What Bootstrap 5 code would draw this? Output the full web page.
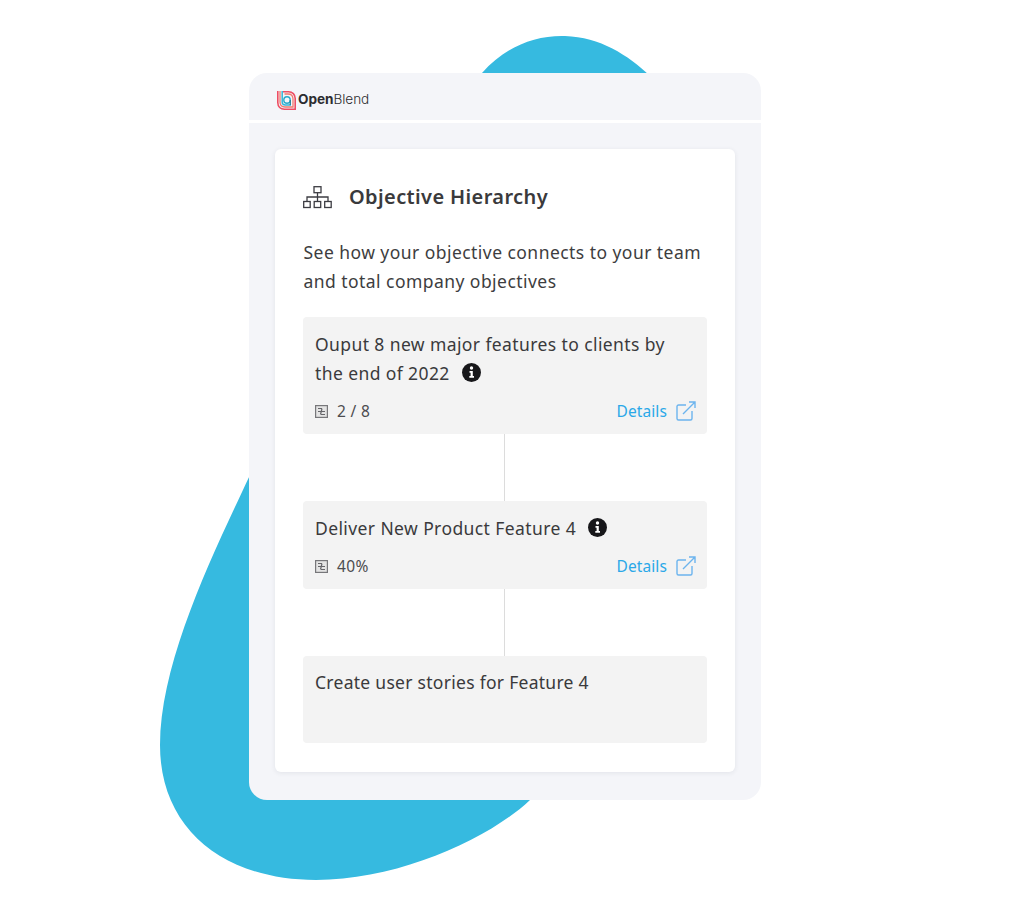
<!DOCTYPE html>
<html lang="en">
<head>
<meta charset="utf-8">
<title>Objective Hierarchy</title>
<link rel="stylesheet" href="https://cdn.jsdelivr.net/npm/bootstrap@5.3.0/dist/css/bootstrap.min.css">
<style>
html,body{margin:0;background:#fff;font-family:"Noto Sans","Open Sans",sans-serif;color:#3a3a3c}
.stage{width:1010px;height:916px;padding:73px 0 0 249px}
.blob{left:0;top:0;width:1010px;height:916px}
.shell{width:512px;height:727px;background:#f4f5f9;border-radius:18px}
.topbar{height:47px;padding:7px 28px 0;gap:2px}
.divider{height:3px;background:#fff}
.brand{font-family:"Inter","Noto Sans",sans-serif;font-size:13.6px;letter-spacing:-.05px;color:#2c2c30;line-height:1;font-weight:300}
.brand b{font-weight:700}
.panel{margin:26px 26px 0;height:623px;border:0;border-radius:6px;box-shadow:0 1px 5px rgba(40,50,80,.09);padding:34px 28px 28px}
.heading{gap:17px;height:28px;margin-bottom:27px}
.heading h1{font-size:20px;font-weight:600;color:#3a3a3c;font-family:"Noto Sans",sans-serif;letter-spacing:.38px}
.intro{margin:0 0 21px;padding-left:.5px;font-size:17.5px;line-height:29px;color:#3d3d40;letter-spacing:.45px}
.obj{background:#f3f3f3;border-radius:4px;padding:13px 11px 0 12px;font-size:17.5px;line-height:29px;color:#3a3a3c;letter-spacing:.4px}
.obj-a{height:117px}
.obj-b{height:87.5px}
.obj-c{height:87.5px;padding-top:12px;letter-spacing:.28px}
.info{display:inline-block;vertical-align:-2px;margin-left:7px}
.metric{font-size:15.5px;line-height:22px;margin-top:12px;letter-spacing:.35px}
.metric-left{gap:9px;color:#4c4c4f}
.detail{gap:9px;color:#2aa8e8;text-decoration:none;letter-spacing:.1px}
.link-line{width:1px;height:67px;background:#dcdcdc;margin:0 0 0 201px}
</style>
</head>
<body>
<div class="stage position-relative overflow-hidden">
<svg class="blob position-absolute" viewBox="0 0 1010 916" aria-hidden="true">
<path fill="#36bae0" d="M482 73C505 47 535 35 565 36C600 37 628 55 650 76L650 120L530 800C490 838 400 880 316 880C225 880 160 830 160 745C160 660 215 550 250 475L300 300Z"/>
</svg>
<div class="shell position-relative overflow-hidden">
  <div class="topbar d-flex align-items-center">
    <svg width="19" height="19" viewBox="0 0 19 19" fill="none" aria-hidden="true">
      <path d="M.8 0V11.500C.8 15.500 3.500 18.200 7.500 18.200H18.200V7.500C18.200 3.500 15.500.8 11.500.8H6" stroke="#ee4d63" stroke-width="1.600"/>
      <path d="M3 0V11C3 14 5 16 8 16H16V8C16 5 14 3 11 3H7.500" stroke="#f07a6e" stroke-width="1.300"/>
      <path d="M5.200 0V11C5.200 12.700 6.500 14 8.300 14H14" stroke="#35b5d6" stroke-width="1.500"/>
      <circle cx="10" cy="9" r="3.200" stroke="#2aa9c9" stroke-width="1.400"/>
      <path d="M13.300 9V14" stroke="#277f99" stroke-width="1.300"/>
    </svg>
    <span class="brand"><b>Open</b>Blend</span>
  </div>
  <div class="divider"></div>
  <div class="panel card">
    <div class="heading d-flex align-items-center">
      <svg width="29" height="23" viewBox="0 0 29 23" fill="none" stroke="#3c3c42" stroke-width="1.300" aria-hidden="true">
        <rect x="11" y=".7" width="7" height="6"/>
        <path d="M14.500 6.700V15M4 15V11H25V15"/>
        <rect x=".7" y="15.500" width="6.500" height="6"/><rect x="11.200" y="15.500" width="6.500" height="6"/><rect x="21.700" y="15.500" width="6.500" height="6"/>
      </svg>
      <h1 class="m-0">Objective Hierarchy</h1>
    </div>
    <p class="intro">See how your objective connects to your team and total company objectives</p>

    <div class="obj obj-a">
      <div>Ouput 8 new major features to clients by the end of 2022 <svg class="info" width="19" height="19" viewBox="0 0 19 19" aria-hidden="true"><circle cx="9.500" cy="9.500" r="9.500" fill="#17171a"/><circle cx="9.500" cy="5" r="1.700" fill="#fff"/><path d="M7.500 8H10.800V13H12V14.700H7.300V13H8.600V9.700H7.500Z" fill="#fff"/></svg></div>
      <div class="metric d-flex justify-content-between align-items-center">
        <span class="metric-left d-flex align-items-center"><svg width="13" height="13" viewBox="0 0 13 13" fill="none" aria-hidden="true"><rect x=".6" y=".6" width="11.800" height="11.800" fill="#e4e4e4" stroke="#77777a" stroke-width="1.200"/><path d="M3 3.500H7M3 6.500H10M6 9.500H10M7 3.500L5.500 9.500" stroke="#66666a" stroke-width="1.200"/></svg>2 / 8</span>
        <a class="detail d-flex align-items-center" href="#">Details <svg width="20" height="20" viewBox="0 0 20 20" fill="none" stroke="#6cb4ee" stroke-width="1.400" aria-hidden="true"><path d="M10 4H2.500A1.500 1.500 0 0 0 1 5.500V17.500A1.500 1.500 0 0 0 2.500 19H14.500A1.500 1.500 0 0 0 16 17.500V10"/><path d="M7 13L19 1M13 1H19V7"/></svg></a>
      </div>
    </div>
    <div class="link-line"></div>
    <div class="obj obj-b">
      <div>Deliver New Product Feature 4 <svg class="info" width="19" height="19" viewBox="0 0 19 19" aria-hidden="true"><circle cx="9.500" cy="9.500" r="9.500" fill="#17171a"/><circle cx="9.500" cy="5" r="1.700" fill="#fff"/><path d="M7.500 8H10.800V13H12V14.700H7.300V13H8.600V9.700H7.500Z" fill="#fff"/></svg></div>
      <div class="metric d-flex justify-content-between align-items-center">
        <span class="metric-left d-flex align-items-center"><svg width="13" height="13" viewBox="0 0 13 13" fill="none" aria-hidden="true"><rect x=".6" y=".6" width="11.800" height="11.800" fill="#e4e4e4" stroke="#77777a" stroke-width="1.200"/><path d="M3 3.500H7M3 6.500H10M6 9.500H10M7 3.500L5.500 9.500" stroke="#66666a" stroke-width="1.200"/></svg>40%</span>
        <a class="detail d-flex align-items-center" href="#">Details <svg width="20" height="20" viewBox="0 0 20 20" fill="none" stroke="#6cb4ee" stroke-width="1.400" aria-hidden="true"><path d="M10 4H2.500A1.500 1.500 0 0 0 1 5.500V17.500A1.500 1.500 0 0 0 2.500 19H14.500A1.500 1.500 0 0 0 16 17.500V10"/><path d="M7 13L19 1M13 1H19V7"/></svg></a>
      </div>
    </div>
    <div class="link-line"></div>
    <div class="obj obj-c">Create user stories for Feature 4</div>
  </div>
</div>
</div>
<script src="https://cdn.jsdelivr.net/npm/bootstrap@5.3.0/dist/js/bootstrap.bundle.min.js"></script>
</body>
</html>
